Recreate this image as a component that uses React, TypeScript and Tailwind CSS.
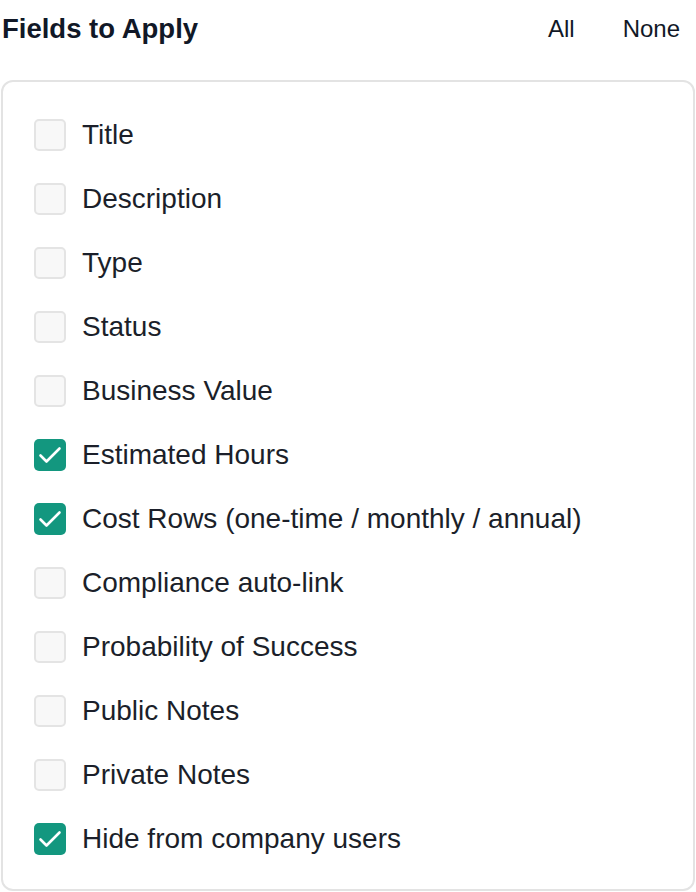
import React, { useState } from "react";

const FIELDS: { label: string; checked: boolean }[] = [
  { label: "Title", checked: false },
  { label: "Description", checked: false },
  { label: "Type", checked: false },
  { label: "Status", checked: false },
  { label: "Business Value", checked: false },
  { label: "Estimated Hours", checked: true },
  { label: "Cost Rows (one-time / monthly / annual)", checked: true },
  { label: "Compliance auto-link", checked: false },
  { label: "Probability of Success", checked: false },
  { label: "Public Notes", checked: false },
  { label: "Private Notes", checked: false },
  { label: "Hide from company users", checked: true },
];

function Box({ checked }: { checked: boolean }) {
  if (checked) {
    return (
      <span className="flex h-[32px] w-[32px] shrink-0 items-center justify-center rounded-[5px] bg-[#13977f]">
        <svg width="32" height="32" viewBox="0 0 32 32" fill="none">
          <path d="M6.5 16.5l6 6L25.5 9.5" stroke="white" strokeWidth="2.6" strokeLinecap="round" strokeLinejoin="round" />
        </svg>
      </span>
    );
  }
  return <span className="h-[32px] w-[32px] shrink-0 rounded-[5px] border-2 border-[#e4e4e4] bg-[#f8f8f8]" />;
}

export default function App() {
  const [items] = useState(FIELDS);
  return (
    <div className="w-[696px] h-[892px] bg-white text-[#1b1f2a]" style={{ fontFamily: '"Liberation Sans", Arial, sans-serif' }}>
      <div className="flex h-[58px] items-center justify-between pl-[2px] pr-[16px]">
        <h2 className="text-[27.5px] font-bold text-[#111827] leading-none">Fields to Apply</h2>
        <div className="flex items-center gap-[48px] text-[24px] leading-none text-[#111827]">
          <button>All</button>
          <button>None</button>
        </div>
      </div>
      <div className="mx-[1px] mt-[22px] flex flex-col rounded-[12px] border-2 border-[#e3e3e3] px-[31px] pt-[37px] pb-[34px]">
        {items.map((f) => (
          <label key={f.label} className="flex h-[64px] items-center gap-[16px] first:-mt-[16px] last:-mb-[16px]">
            <Box checked={f.checked} />
            <span className="text-[28px] leading-none text-[#1b1f2a]">{f.label}</span>
          </label>
        ))}
      </div>
    </div>
  );
}
